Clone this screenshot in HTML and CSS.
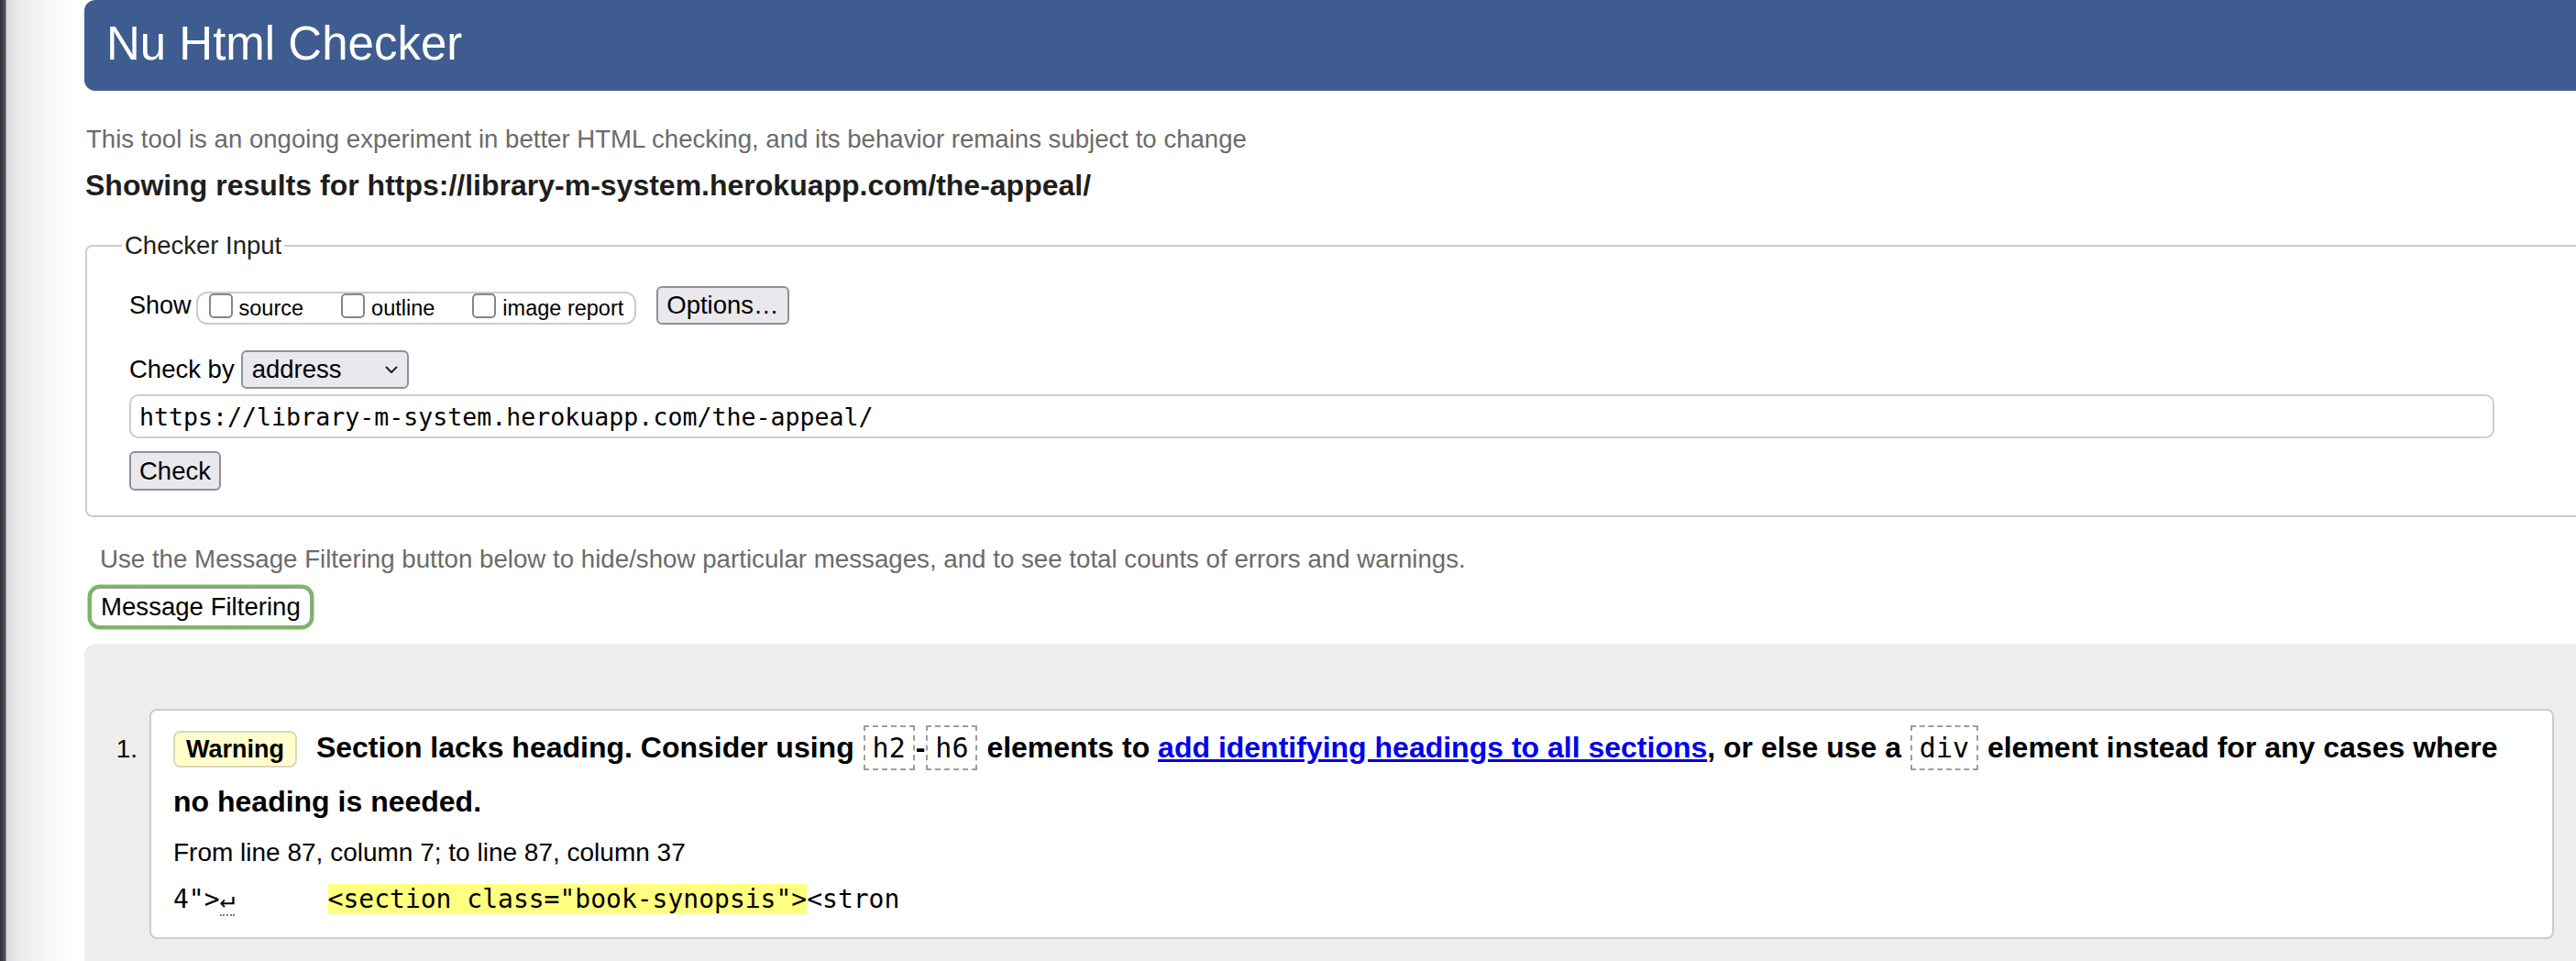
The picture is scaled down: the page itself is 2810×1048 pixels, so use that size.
FILE: index.html
```html
<!DOCTYPE html>
<html lang="en">
<head>
<meta charset="utf-8">
<title>Showing results for https://library-m-system.herokuapp.com/the-appeal/ - Nu Html Checker</title>
<link rel="stylesheet" href="styles.css">
</head>
<body>
<div class="page">
  <h1 class="masthead">Nu Html Checker</h1>
  <p class="tagline">This tool is an ongoing experiment in better HTML checking, and its behavior remains subject to change</p>
  <p class="showing">Showing results for https://library-m-system.herokuapp.com/the-appeal/</p>

  <form class="checker-form">
    <fieldset class="checker">
      <legend class="checker-legend">Checker Input</legend>
      <div class="show-row">
        <span class="show-label">Show</span>
        <span class="opts">
          <label class="opt"><input type="checkbox" class="cb"><span>source</span></label>
          <label class="opt"><input type="checkbox" class="cb"><span>outline</span></label>
          <label class="opt"><input type="checkbox" class="cb"><span>image report</span></label>
        </span>
        <button type="button" class="btn btn-options">Options…</button>
      </div>
      <div class="checkby-row">
        <span class="checkby-label">Check by</span>
        <span class="select">
          <span>address</span>
          <svg class="chev" width="14" height="9" viewBox="0 0 14 9"><polyline points="1.5,1.5 7,7 12.5,1.5" fill="none" stroke="#222" stroke-width="2" stroke-linecap="round" stroke-linejoin="round"/></svg>
        </span>
      </div>
      <input class="url" type="text" value="https://library-m-system.herokuapp.com/the-appeal/">
      <button type="button" class="btn btn-check">Check</button>
    </fieldset>
  </form>

  <p class="hint">Use the Message Filtering button below to hide/show particular messages, and to see total counts of errors and warnings.</p>
  <button type="button" class="filter-btn">Message Filtering</button>

  <div class="results">
    <ol class="msgs">
      <li class="msg-item">
        <span class="num">1.</span>
        <div class="card">
          <p class="msg"><span class="badge">Warning</span> Section lacks heading. Consider using <code class="tag">h2</code>-<code class="tag">h6</code> elements to <a href="#" class="link">add identifying headings to all sections</a>, or else use a <code class="tag">div</code> element instead for any cases where no heading is needed.</p>
          <p class="loc">From line 87, column 7; to line 87, column 37</p>
          <p class="extract">4"&gt;<span class="lf">↵</span>      <mark class="hl">&lt;section class="book-synopsis"&gt;</mark>&lt;stron</p>
        </div>
      </li>
    </ol>
  </div>
</div>
</body>
</html>
```

FILE: styles.css
```css
html, body {
  margin: 0;
  height: 1048px;
  overflow: hidden;
}

body {
  background: linear-gradient(to right, #2c2f33 0, #50545a 6px, #d8d8d8 7px, #e9e9e9 18px, #f7f7f7 50px, #ffffff 85px);
  font-family: "Liberation Sans", Arial, Helvetica, sans-serif;
  color: #000;
}

.page {
  margin-left: 92px;
  width: 2800px;
}

.masthead {
  margin: 0;
  height: 99px;
  box-sizing: border-box;
  padding: 0 0 4px 24px;
  background: #3e5c8f;
  border-radius: 12px 0 0 12px;
  color: #fff;
  font-weight: normal;
  font-size: 51px;
  line-height: 95px;
}

.tagline {
  margin: 37px 0 0 2px;
  font-size: 27.6px;
  line-height: 32px;
  color: #6b6b6b;
}

.showing {
  margin: 16px 0 0 1px;
  font-size: 32px;
  line-height: 37px;
  font-weight: bold;
  color: #1e1e1e;
}

.checker-form {
  margin: 0;
}

.checker {
  margin: 31px 0 0 1px;
  padding: 28px 46px 27px 46px;
  border: 2px solid #cccccc;
  border-radius: 8px;
  width: 2800px;
  box-sizing: border-box;
  min-width: 0;
}

.checker-legend {
  font-size: 27.5px;
  line-height: 32px;
  padding: 0 3px;
  margin-left: -8px;
  color: #222;
}

.show-row {
  display: flex;
  align-items: flex-end;
  height: 42px;
}

.show-label {
  font-size: 27px;
  line-height: 32px;
  margin: 0 5px 5px 0;
}

.opts {
  display: flex;
  align-items: center;
  gap: 41px;
  height: 36px;
  box-sizing: border-box;
  padding: 0 12px 0 12px;
  border: 2px solid #cccccc;
  border-radius: 12px;
}

.opt {
  display: flex;
  align-items: center;
  gap: 7px;
  font-size: 23.5px;
  line-height: 28px;
}

.cb {
  appearance: none;
  -webkit-appearance: none;
  width: 26px;
  height: 27px;
  margin: 0 0 6px 0;
  box-sizing: border-box;
  border: 2.5px solid #85858d;
  border-radius: 5px;
  background: #fff;
}

.btn {
  font-family: "Liberation Sans", Arial, sans-serif;
  font-size: 27.5px;
  color: #000;
  background: #e9e9ed;
  border: 2px solid #8f8f9d;
  border-radius: 6px;
  padding: 0 11px;
  box-sizing: border-box;
}

.btn-options {
  height: 42px;
  margin-left: 22px;
  padding: 0 9px;
}

.checkby-row {
  display: flex;
  align-items: center;
  height: 42px;
  margin-top: 28px;
}

.checkby-label {
  font-size: 27.5px;
  line-height: 32px;
  margin-right: 7px;
}

.select {
  display: flex;
  align-items: center;
  justify-content: space-between;
  width: 183px;
  height: 42px;
  box-sizing: border-box;
  padding: 0 10px 0 10px;
  border: 2px solid #8f8f9d;
  border-radius: 6px;
  background: #e9e9ed;
  font-size: 27.5px;
}

.chev {
  display: block;
}

.url {
  display: block;
  margin: 6px 0 0;
  width: 2580px;
  height: 48px;
  box-sizing: border-box;
  padding: 0 9px;
  border: 2px solid #cccccc;
  border-radius: 10px;
  font-family: "DejaVu Sans Mono", "Liberation Mono", monospace;
  font-size: 26.6px;
  color: #000;
  background: #fff;
}

.btn-check {
  display: block;
  margin-top: 14px;
  height: 43px;
  padding: 0 9px;
}

.hint {
  margin: 30px 0 0 17px;
  font-size: 27.7px;
  line-height: 32px;
  color: #6b6b6b;
}

.filter-btn {
  display: block;
  margin: 15px 0 0 7px;
  height: 42px;
  box-sizing: border-box;
  padding: 0 10px;
  background: #fff;
  border: 1px solid #9a9a9a;
  border-radius: 10px;
  box-shadow: 0 0 0 3.5px #7cb65f;
  font-family: "Liberation Sans", Arial, sans-serif;
  font-size: 27.6px;
  color: #000;
}

.results {
  margin-top: 19px;
  width: 2800px;
  height: 420px;
  box-sizing: border-box;
  padding: 71px 106px 0 0;
  background: #eeeeee;
  border-radius: 12px 0 0 0;
}

.msgs {
  list-style: none;
  margin: 0;
  padding: 0;
}

.msg-item {
  display: flex;
  align-items: baseline;
}

.num {
  width: 71px;
  flex: none;
  box-sizing: border-box;
  padding-right: 13px;
  text-align: right;
  font-size: 28px;
}

.card {
  flex: 1;
  background: #fff;
  border: 2px solid #cccccc;
  border-radius: 8px;
  padding: 12px 24px 23px;
}

.msg {
  margin: 0;
  font-weight: bold;
  font-size: 32px;
  line-height: 57px;
}

.badge {
  background: #ffffcc;
  border: 2px solid #d9d9b6;
  border-radius: 8px;
  padding: 3px 12px;
  margin-right: 12px;
  font-size: 27px;
}

.tag {
  font-family: "DejaVu Sans Mono", "Liberation Mono", monospace;
  font-weight: normal;
  font-size: 30px;
  border: 2px dashed #9d9d9d;
  padding: 5px 8px;
  margin: 0 1px;
}

.link {
  color: #0000ee;
  text-decoration: underline;
}

.loc {
  margin: 9px 0 0;
  font-size: 28px;
  line-height: 36px;
}

.extract {
  margin: 15px 0 0;
  font-family: "DejaVu Sans Mono", "Liberation Mono", monospace;
  font-size: 28px;
  line-height: 36px;
  white-space: pre;
}

.lf {
  border-bottom: 2px dotted #777;
}

.hl {
  background: #ffff80;
  color: inherit;
}
```
